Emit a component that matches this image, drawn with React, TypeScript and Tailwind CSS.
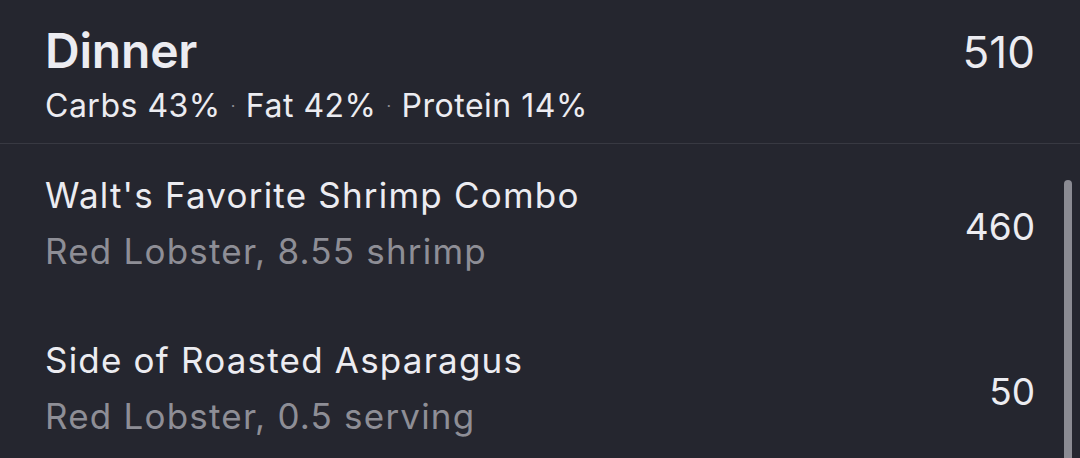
import React from 'react'

const items = [
  { name: "Walt's Favorite Shrimp Combo", detail: 'Red Lobster, 8.55 shrimp', cals: 460 },
  { name: 'Side of Roasted Asparagus', detail: 'Red Lobster, 0.5 serving', cals: 50 },
]

export default function App() {
  return (
    <div
      className="w-[1080px] h-[458px] overflow-hidden bg-[#25262f] text-[#ececf1]"
      style={{ fontFamily: 'Inter, "Noto Sans", sans-serif' }}
    >
      {/* Meal header */}
      <div className="h-[144px] pl-[45px] pr-[45px] pt-[25px] border-b border-[#383942]">
        <div className="flex items-baseline justify-between">
          <div className="text-[48px] leading-[52px] font-semibold tracking-[-0.2px]">Dinner</div>
          <div className="text-[44px] leading-[52px]">510</div>
        </div>
        <div className="mt-[10px] text-[32px] leading-[36px] tracking-[0.5px] flex items-center">
          <span>Carbs 43%</span>
          <span className="mx-[10px] text-[#8e8e96] text-[16px]">·</span>
          <span>Fat 42%</span>
          <span className="mx-[10px] text-[#8e8e96] text-[16px]">·</span>
          <span>Protein 14%</span>
        </div>
      </div>

      {/* Food list */}
      <div className="relative">
        {items.map((it) => (
          <div key={it.name} className="h-[165px] pl-[45px] pr-[45px] pt-[31px] flex items-start justify-between">
            <div className="tracking-[1.2px]">
              <div className="text-[35px] leading-[40px]">{it.name}</div>
              <div className="mt-[16px] text-[35px] leading-[40px] text-[#8e8e96]">{it.detail}</div>
            </div>
            <div className="mt-[32px] text-[37px] leading-[40px]">{it.cals}</div>
          </div>
        ))}
        <div className="absolute right-[8px] top-[36px] w-[8px] h-[400px] rounded-full bg-[#8b8b93]" />
      </div>
    </div>
  )
}
